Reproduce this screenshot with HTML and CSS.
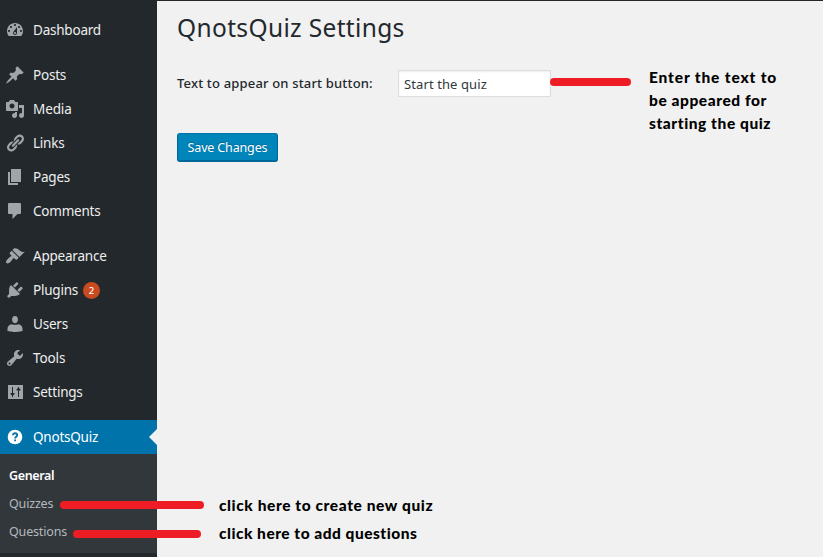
FILE: index.html
```html
<!DOCTYPE html>
<html lang="en">
<head>
<meta charset="utf-8">
<title>QnotsQuiz Settings</title>
<link rel="stylesheet" href="styles.css">
</head>
<body>
<div class="layout">
  <nav class="sidebar">
    <ul class="menu">
      <li class="item"><svg class="icon" viewBox="0 0 20 20"><path d="M3.76 16h12.48c1.1-1.37 1.76-3.11 1.76-5 0-4.42-3.58-8-8-8s-8 3.58-8 8c0 1.89.66 3.63 1.76 5zM10 4c.55 0 1 .45 1 1s-.45 1-1 1-1-.45-1-1 .45-1 1-1zM6 6c.55 0 1 .45 1 1s-.45 1-1 1-1-.45-1-1 .45-1 1-1zm8 0c.55 0 1 .45 1 1s-.45 1-1 1-1-.45-1-1 .45-1 1-1zm-5.37 5.55L12 7v6c0 1.1-.9 2-2 2s-2-.9-2-2c0-.57.24-1.08.63-1.45zM4 10c.55 0 1 .45 1 1s-.45 1-1 1-1-.45-1-1 .45-1 1-1zm12 0c.55 0 1 .45 1 1s-.45 1-1 1-1-.45-1-1 .45-1 1-1zm-5 3c0-.55-.45-1-1-1s-1 .45-1 1 .45 1 1 1 1-.45 1-1z"/></svg><span>Dashboard</span></li>
      <li class="item gap"><svg class="icon" viewBox="0 0 20 20"><path d="M10.44 3.02l1.82-1.82 6.36 6.35-1.83 1.82c-1.05-.68-2.48-.57-3.41.36l-.75.75c-.92.93-1.04 2.35-.35 3.41l-1.83 1.82-2.41-2.41-2.8 2.79c-.42.42-3.38 2.71-3.8 2.29s1.86-3.39 2.28-3.81l2.79-2.79L4.1 9.36l1.83-1.82c1.05.69 2.48.57 3.4-.36l.75-.75c.93-.92 1.05-2.35.36-3.41z"/></svg><span>Posts</span></li>
      <li class="item"><svg class="icon" viewBox="0 0 20 20"><path d="M13 11V4c0-.55-.45-1-1-1h-1.67L9 1H5L3.67 3H2c-.55 0-1 .45-1 1v7c0 .55.45 1 1 1h10c.55 0 1-.45 1-1zM7 4.5c1.38 0 2.5 1.12 2.5 2.5S8.38 9.5 7 9.5 4.5 8.38 4.5 7 5.62 4.5 7 4.5zM14 6h5v10.5c0 1.38-1.12 2.5-2.5 2.5S14 17.88 14 16.5s1.12-2.5 2.5-2.5c.17 0 .34.02.5.05V9h-3V6zm-4 8.05V13h2v3.5c0 1.38-1.12 2.5-2.5 2.5S7 17.88 7 16.5 8.12 14 9.5 14c.17 0 .34.02.5.05z"/></svg><span class="even">Media</span></li>
      <li class="item"><svg class="icon" viewBox="0 0 20 20"><path d="M17.74 2.76c1.68 1.69 1.68 4.41 0 6.1l-1.53 1.52c-1.12 1.12-2.7 1.47-4.14 1.09l2.62-2.61.76-.77.76-.76c.84-.84.84-2.2 0-3.04-.84-.85-2.2-.85-3.04 0l-.77.76-3.38 3.38c-.37-1.44-.02-3.02 1.1-4.14l1.52-1.53c1.69-1.68 4.42-1.68 6.1 0zM8.59 13.43l5.34-5.34c.42-.42.42-1.1 0-1.52-.44-.43-1.13-.39-1.53 0l-5.33 5.34c-.42.42-.42 1.1 0 1.52.44.43 1.13.39 1.52 0zm-.76 2.29l4.14-4.15c.38 1.44.03 3.02-1.09 4.14l-1.52 1.53c-1.69 1.68-4.41 1.68-6.1 0-1.68-1.68-1.68-4.42 0-6.1l1.53-1.52c1.12-1.12 2.7-1.47 4.14-1.1l-4.14 4.15c-.85.84-.85 2.2 0 3.05.84.84 2.2.84 3.04 0z"/></svg><span>Links</span></li>
      <li class="item"><svg class="icon" viewBox="0 0 20 20"><path d="M6 15V2h10v13H6zm-1 1h8v2H3V5h2v11z"/></svg><span>Pages</span></li>
      <li class="item"><svg class="icon" viewBox="0 0 20 20"><path d="M4 2h11q1 0 1 1v9q0 1-1 1h-2.500l-5 5v-5H4q-1 0-1-1V3q0-1 1-1z"/></svg><span>Comments</span></li>
      <li class="item gap"><svg class="icon" viewBox="0 0 20 20"><path d="M14.48 11.06L7.41 3.99l1.5-1.5c.5-.56 2.3-.47 3.51.32 1.21.8 1.43 1.28 2.91 2.1 1.18.64 2.45 1.26 4.45.85zm-.71.71L6.7 4.7 4.93 6.47c-.39.39-.39 1.02 0 1.41l1.06 1.06c.39.39.39 1.03 0 1.42-.6.6-1.43 1.11-2.21 1.69-.35.26-.7.53-1.01.84C1.43 14.23.4 16.08 1.4 17.07c.99 1 2.84-.03 4.18-1.36.31-.31.58-.66.85-1.02.57-.78 1.08-1.61 1.69-2.21.39-.39 1.02-.39 1.41 0l1.06 1.06c.39.39 1.02.39 1.41 0z"/></svg><span>Appearance</span></li>
      <li class="item"><svg class="icon" viewBox="0 0 20 20"><path d="M13.11 4.36L9.87 7.6 8 5.73l3.24-3.24c.35-.34 1.05-.2 1.56.32.52.51.66 1.21.31 1.55zm-8 1.77l.91-1.12 9.01 9.01-1.19.84c-.71.71-2.63 1.16-3.82 1.16H6.14L4.9 17.26c-.59.59-1.54.59-2.12 0-.59-.58-.59-1.53 0-2.12l1.24-1.24v-3.88c0-1.13.4-3.19 1.09-3.89zm7.26 3.97l3.24-3.24c.34-.35 1.04-.21 1.55.31.52.51.66 1.21.31 1.55l-3.24 3.25z"/></svg><span>Plugins</span><b class="count">2</b></li>
      <li class="item"><svg class="icon" viewBox="0 0 20 20"><path d="M10 9.250c-2.270 0-2.900-2-2.900-3.700C7.100 3.300 8 2 10 2s2.900 1.300 2.900 3.550c0 1.700-.630 3.700-2.900 3.700zM6.500 10.200Q10 11.300 13.500 10.200c2.200.400 4 2.100 4 4.300v2.500s-3.900 1-7.500 1-7.500-1-7.500-1v-2.500c0-2.200 1.800-3.900 4-4.300z"/></svg><span>Users</span></li>
      <li class="item"><svg class="icon" viewBox="0 0 20 20"><path d="M16.68 9.77c-1.34 1.34-3.3 1.67-4.95.99l-5.41 6.52c-.99.99-2.59.99-3.58 0s-.99-2.59 0-3.57l6.52-5.42c-.68-1.65-.35-3.61.99-4.95 1.28-1.28 3.12-1.62 4.72-1.06l-2.89 2.89 2.82 2.82 2.86-2.87c.53 1.58.18 3.39-1.08 4.65zM3.81 16.21c.4.39 1.04.39 1.43 0 .4-.4.4-1.04 0-1.43-.39-.4-1.03-.4-1.43 0-.39.39-.39 1.03 0 1.43z"/></svg><span class="even">Tools</span></li>
      <li class="item"><svg class="icon" viewBox="0 0 20 20"><path d="M3 3h15v14H3z"/><path class="cut" d="M7 5h1v6h1.500v1L8 13.500V15H7v-1.500L5.500 12v-1H7zM13 15h1V8.500h1.500v-1L14 6V5h-1v1l-1.500 1.500v1H13z"/></svg><span>Settings</span></li>
      <li class="item gap active"><svg class="icon" viewBox="0 0 20 20"><circle cx="10" cy="10" r="7.300"/><path class="mark" d="M7.900 8.200c0-2.700 4.300-2.500 4.300 0 0 1.500-2.100 1.600-2.100 3.200M10.100 12.600v1.700"/></svg><span>QnotsQuiz</span></li>
    </ul>
    <ul class="submenu">
      <li class="current"><span>General</span></li>
      <li><span>Quizzes</span></li>
      <li><span>Questions</span></li>
    </ul>
  </nav>
  <main class="content">
    <h1>QnotsQuiz Settings</h1>
    <div class="field">
      <label for="start">Text to appear on start button:</label>
      <input id="start" type="text" value="Start the quiz">
    </div>
    <button class="save" type="button">Save Changes</button>
  </main>
</div>
<i class="stroke stroke-input"></i>
<i class="stroke stroke-quizzes"></i>
<i class="stroke stroke-questions"></i>
<p class="note note-input"><span class="wide">Enter the text to</span><br>be appeared for<br>starting the quiz</p>
<p class="note note-quizzes">click here to create new quiz</p>
<p class="note note-questions">click here to add questions</p>
</body>
</html>
```
FILE: styles.css
```css
* { box-sizing: border-box; }
body {
  margin: 0;
  height: 557px;
  overflow: hidden;
  position: relative;
  background: #f1f1f1;
  border-top: 1px solid #23282d;
  font-family: "Noto Sans", "Open Sans", sans-serif;
  font-size: 13.5px;
}
ul { list-style: none; margin: 0; padding: 0; }
.layout { display: flex; height: 556px; }
.sidebar { width: 157px; flex: none; background: #23282d; color: #eee; }
.menu { padding-top: 12px; }
.item {
  height: 34px;
  display: flex;
  align-items: center;
  padding-left: 5px;
  letter-spacing: -.22px;
  white-space: nowrap;
}
.even { letter-spacing: -.1px; }
.gap { margin-top: 11px; }
.icon { width: 20px; height: 20px; margin-right: 8px; flex: none; fill: #a0a5aa; }
.cut { fill: #23282d; }
.active { background: #0073aa; color: #fff; position: relative; }
.active .icon { fill: #fff; }
.active .mark { fill: none; stroke: #0073aa; stroke-width: 1.8; }
.active::after {
  content: "";
  position: absolute;
  right: 0;
  top: 9px;
  border: 8px solid transparent;
  border-left: 0;
  border-right-color: #f1f1f1;
}
.count {
  width: 17px;
  height: 17px;
  margin-left: 5px;
  border-radius: 50%;
  background: #ca4a1f;
  color: #fff;
  font-size: 9.5px;
  line-height: 17px;
  font-weight: 500;
  letter-spacing: 0;
  text-align: center;
}
.submenu {
  height: 99px;
  padding: 8px 0 0 9px;
  background: #32373c;
  color: #b4b9be;
  font-size: 12.5px;
  line-height: 28px;
  letter-spacing: -.17px;
}
.current { color: #fff; font-weight: 600; letter-spacing: -.35px; }
.content { flex: 1; padding: 9px 0 0 20px; color: #23282d; }
h1 { margin: 0; font-size: 24.5px; font-weight: 400; line-height: 36px; letter-spacing: .35px; }
.field { display: flex; align-items: flex-start; margin-top: 24px; height: 28px; }
label { width: 221px; font-size: 13px; line-height: 26px; font-weight: 500; letter-spacing: .17px; white-space: nowrap; }
input {
  width: 153px;
  height: 27px;
  padding: 0 5px;
  border: 1px solid #ddd;
  box-shadow: inset 0 1px 2px rgba(0, 0, 0, .07);
  background: #fff;
  color: #32373c;
  font: 13px "Noto Sans", sans-serif;
  letter-spacing: .1px;
}
.save {
  display: block;
  width: 101px;
  height: 29px;
  margin-top: 35px;
  padding: 0;
  border: 1px solid #006799;
  border-top-color: #0073aa;
  border-radius: 3px;
  box-shadow: inset 0 -1px 0 #006799;
  background: #0085ba;
  color: #fff;
  text-shadow: 0 -1px 1px #006799;
  font: 12.5px "Noto Sans", sans-serif;
  letter-spacing: -.15px;
}
.stroke { position: absolute; height: 8px; border-radius: 4px; background: #ee1c24; }
.stroke-input { left: 550px; top: 77px; width: 81px; }
.stroke-quizzes { left: 60px; top: 500px; width: 144px; }
.stroke-questions { left: 73px; top: 529px; width: 128px; }
.note {
  position: absolute;
  margin: 0;
  color: #000;
  font: 900 15.5px/23px Lato, sans-serif;
  letter-spacing: .56px;
  white-space: nowrap;
}
.wide { letter-spacing: .84px; }
.note-input { left: 649px; top: 65px; }
.note-quizzes { left: 219px; top: 493px; letter-spacing: .59px; }
.note-questions { left: 219px; top: 521px; letter-spacing: .5px; }
```
